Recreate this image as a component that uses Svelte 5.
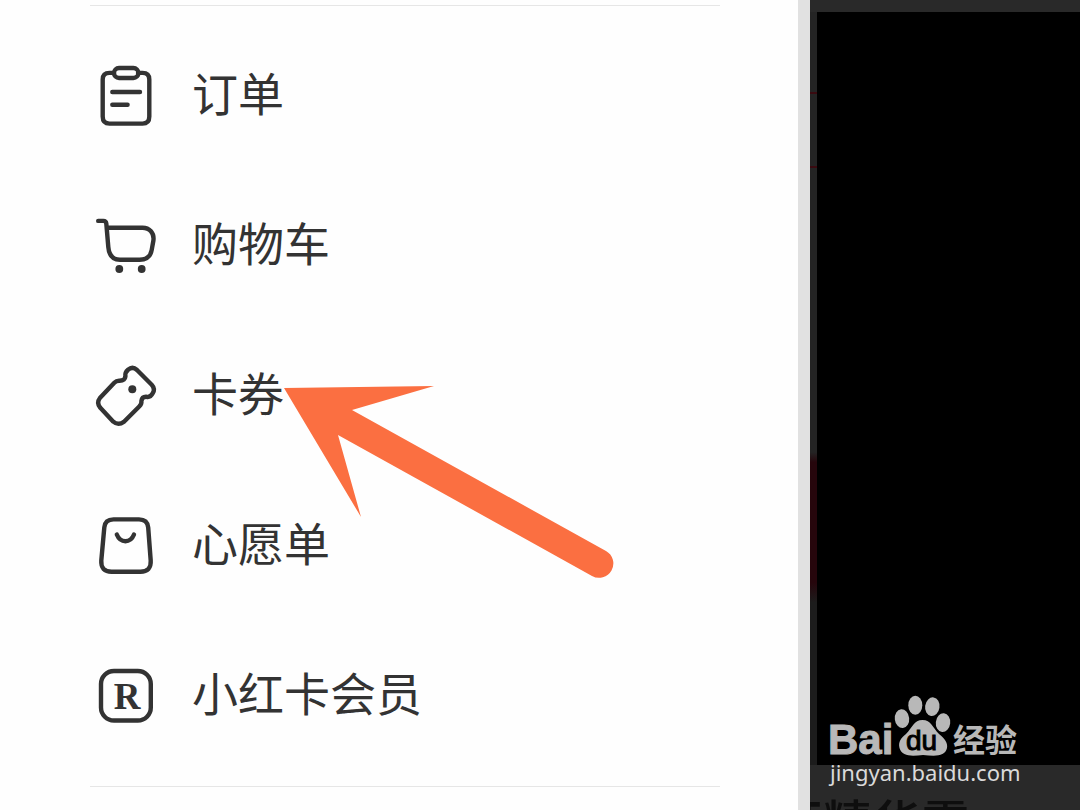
<script>
  const items = [
    { id: 'orders', label: '订单' },
    { id: 'cart', label: '购物车' },
    { id: 'coupons', label: '卡券' },
    { id: 'wishlist', label: '心愿单' },
    { id: 'member', label: '小红卡会员' }
  ];
</script>

<div class="page">
  <div class="drawer">
    <nav class="menu">
      {#each items as item}
        <a class="item" href="#{item.id}">
          <svg class="icon" viewBox="0 0 60 60" aria-hidden="true">
            {#if item.id === 'orders'}
              <path d="M18 6.9H13.5Q6.7 6.9 6.7 13.5V50.5Q6.7 57.6 13.5 57.6H46.5Q53.3 57.6 53.3 50.5V13.5Q53.3 6.9 46.5 6.9H42" />
              <rect x="18" y="2" width="24.4" height="10" rx="5" />
              <path d="M16.3 26H44M16.3 38.7H31.6" />
            {:else if item.id === 'cart'}
              <path d="M2.2 4.9H7.4Q10 4.9 10.3 7.5L12.3 31C13 40 17 43.7 24 43.7H43.5C51 43.7 54.7 40 55.7 34L57.4 24.5C58.4 17 53.5 11.7 46.5 11.7H11" />
              <circle class="dot" cx="23.3" cy="53" r="3.9" />
              <circle class="dot" cx="45.7" cy="53" r="3.9" />
            {:else if item.id === 'coupons'}
              <path d="M41 4L55.7 18.8Q59.5 23 56.700 27.3Q54.5 31.6 50.5 30.8Q46 30.5 45.4 35Q45.8 38 43.5 40.2L28 55.7Q22.3 60 17.3 55.7L4.300 41.8Q.2 36.8 3.9 32L18.3 16.8Q20.4 14.6 23.5 14.8Q29 14.5 29.4 10.5Q28.8 6.5 32 3.8Q36.5-.1 41 4Z" />
              <circle class="dot" cx="36.3" cy="23.3" r="4" />
            {:else if item.id === 'wishlist'}
              <path d="M17.5 3.4H43C49 3.4 51.7 6 52.2 11.5L54.7 44.5C55.2 52 51.5 55.7 44.5 55.7H15.5C8.5 55.7 4.8 52 5.3 44.5L8.3 11.5C8.8 6 11.5 3.4 17.5 3.4Z" />
              <path d="M20.8 18.5Q23.5 25.2 29.4 25.2T38 18.5" />
            {:else}
              <rect x="5" y="5" width="49.8" height="49.5" rx="13" />
              <text x="31" y="42.5" text-anchor="middle">R</text>
            {/if}
          </svg>
          <span class="label">{item.label}</span>
        </a>
      {/each}
    </nav>
    <svg class="arrow" viewBox="0 0 332 194" aria-hidden="true">
      <path d="M0 3L150 1L68 25L322 166A14 14 0 0 1 308 191L54 50L77 132Z" />
    </svg>
  </div>

  <div class="backdrop">
    <div class="cover"></div>
    <div class="behind">肝精华露</div>
    <div class="watermark">
      <svg class="logo" viewBox="0 0 194 63" role="img" aria-label="Baidu 经验">
        <text class="bai" x="-2" y="58">Bai</text>
        <ellipse cx="72" cy="22.7" rx="7.2" ry="9.4" transform="rotate(-6 72 22.7)" />
        <ellipse cx="85.3" cy="9.2" rx="7" ry="9.5" />
        <ellipse cx="102.3" cy="10.7" rx="7.2" ry="9.4" transform="rotate(8 102.3 10.7)" />
        <ellipse cx="113" cy="26.7" rx="7.2" ry="9.4" transform="rotate(6 113 26.7)" />
        <path d="M92.5 24C101 24 103 32 109 38C115 43 118 47 117 52C115 61 105 60 93 59C82 60 72 61 69.5 52C68 46 71 42 76 38C82 32 84 24 92.5 24Z" />
        <text class="du" x="76" y="54">du</text>
        <text class="jy" x="123" y="56">经验</text>
      </svg>
      <div class="url">jingyan.baidu.com</div>
    </div>
  </div>
</div>

<style>
  :global(body) {
    background: #fefefe;
  }
  .page {
    display: flex;
    min-height: 100vh;
    overflow: hidden;
    font-family: "Noto Sans CJK SC", sans-serif;
  }
  .drawer {
    position: relative;
    box-sizing: border-box;
    width: 75%;
    padding: 5px 78px 0 90px;
    border-right: 12px solid #e1e1e1;
    background: #fefefe;
  }
  .menu {
    display: flex;
    flex-direction: column;
    padding: 15px 0;
    border-top: 1px solid #e6e6e6;
    border-bottom: 1px solid #e6e6e6;
  }
  .item {
    display: flex;
    align-items: center;
    gap: 36px;
    height: 150px;
    padding-left: 6px;
    color: #333;
    text-decoration: none;
  }
  .icon {
    width: 60px;
    height: 60px;
    overflow: visible;
    fill: none;
    stroke: #333;
    stroke-width: 4.4;
    stroke-linecap: round;
    stroke-linejoin: round;
  }
  .icon .dot {
    fill: #333;
    stroke: none;
  }
  .icon text {
    fill: #333;
    stroke: none;
    font: bold 37px "Liberation Serif", serif;
  }
  .label {
    padding-bottom: 10px;
    font-size: 46px;
    line-height: 60px;
  }
  .arrow {
    position: absolute;
    left: 284px;
    top: 385px;
    width: 332px;
    height: 194px;
    fill: #fb6f41;
  }
  .backdrop {
    position: relative;
    flex: 1;
    display: flex;
    flex-direction: column;
    padding-top: 12px;
    background: #292929;
  }
  .cover {
    flex: 1;
    border-left: 7px solid;
    border-image: linear-gradient(#242424 0 81px, #3a0a10 81px 83px, #242424 83px 155px, #3a0a10 155px 157px, #242424 157px 440px, #26060c 450px 570px, #1c1c1c 590px) 1;
    background: #000;
  }
  .behind {
    height: 45px;
    overflow: hidden;
    margin-left: -36px;
    color: #0e0e0e;
    font-size: 49px;
    font-weight: 500;
    line-height: 110px;
    white-space: nowrap;
    clip-path: inset(0 0 0 36px);
  }
  .watermark {
    position: absolute;
    right: 56px;
    bottom: 25px;
    width: 194px;
  }
  .logo {
    display: block;
    width: 194px;
    height: 63px;
    overflow: visible;
    fill: #b8b8b8;
  }
  .bai {
    font: bold 42px "Liberation Sans", sans-serif;
    stroke: #b8b8b8;
    stroke-width: 1;
  }
  .du {
    fill: #000;
    stroke: #000;
    stroke-width: 1;
    font: 28px "Liberation Sans", sans-serif;
  }
  .jy {
    font: bold 32px "Noto Sans CJK SC", sans-serif;
  }
  .url {
    color: #dadada;
    font: 22px/26px "Noto Sans", sans-serif;
    white-space: nowrap;
  }
</style>
